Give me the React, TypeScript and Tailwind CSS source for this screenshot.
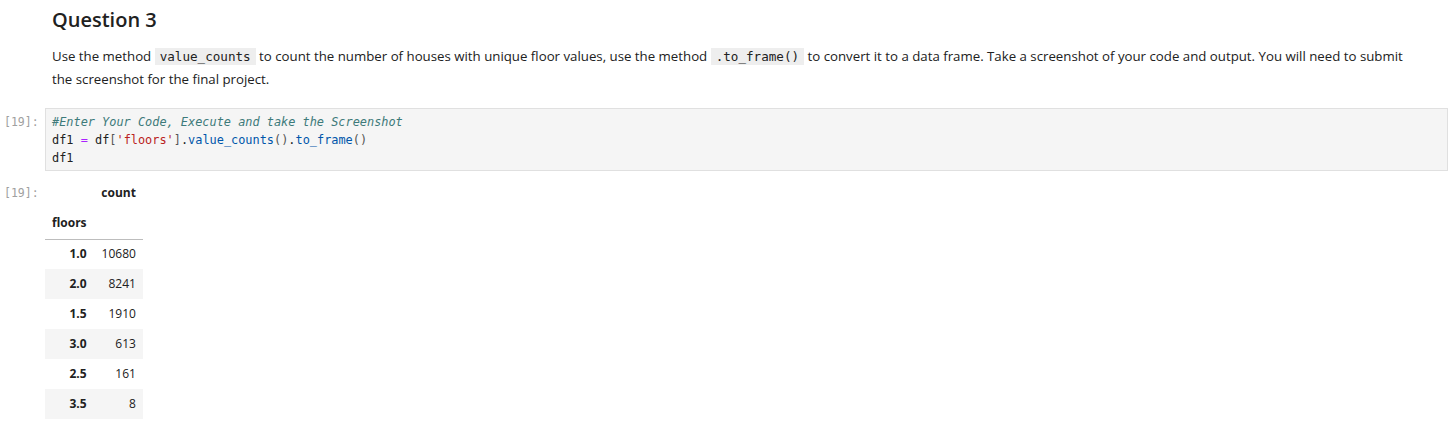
const rows = [
  { floors: "1.0", count: 10680 },
  { floors: "2.0", count: 8241 },
  { floors: "1.5", count: 1910 },
  { floors: "3.0", count: 613 },
  { floors: "2.5", count: 161 },
  { floors: "3.5", count: 8 },
];

const sans = "font-['Open_Sans',sans-serif]";
const mono = "font-['DejaVu_Sans_Mono',monospace]";

function Prompt({ children }: { children: React.ReactNode }) {
  return (
    <div className={`w-[45px] shrink-0 pl-[4px] text-[11.5px] text-[#a0a0a0] ${mono}`}>
      {children}
    </div>
  );
}

function InlineCode({ children }: { children: React.ReactNode }) {
  return (
    <code className={`bg-[#eeeeee] px-[5px] py-[1px] text-[12.6px] text-[#212121] ${mono}`}>
      {children}
    </code>
  );
}

export default function App() {
  return (
    <div className={`min-h-[427px] bg-white pr-[4px] text-[#212121] ${sans}`}>
      {/* markdown cell */}
      <div className="flex">
        <div className="w-[45px] shrink-0" />
        <div className="flex-1 pl-[7px] pr-[30px]">
          <h3 className="pt-[7px] text-[20px] font-semibold leading-[26px]">Question 3</h3>
          <p className="mt-[12px] text-[13.25px] leading-[22px]">
            Use the method <InlineCode>value_counts</InlineCode> to count the number of houses with unique floor
            values, use the method <InlineCode>.to_frame()</InlineCode> to convert it to a data frame. Take a
            screenshot of your code and output. You will need to submit the screenshot for the final project.
          </p>
        </div>
      </div>

      {/* code cell */}
      <div className="mt-[18px] flex">
        <Prompt>
          <div className="pt-[5px] leading-[18px]">[19]:</div>
        </Prompt>
        <div
          className={`flex-1 border border-[#e0e0e0] bg-[#f5f5f5] px-[6px] pt-[4px] pb-[3px] text-[11.9px] leading-[18px] ${mono}`}
        >
          <div className="italic text-[#3d7a7a]">#Enter Your Code, Execute and take the Screenshot</div>
          <div>
            <span>df1 </span>
            <span className="text-[#aa22ff]">=</span>
            <span> df</span>
            <span className="text-[#555555]">[</span>
            <span className="text-[#ba2121]">'floors'</span>
            <span className="text-[#555555]">]</span>
            <span>.</span>
            <span className="text-[#0055aa]">value_counts</span>
            <span className="text-[#555555]">()</span>
            <span>.</span>
            <span className="text-[#0055aa]">to_frame</span>
            <span className="text-[#555555]">()</span>
          </div>
          <div>df1</div>
        </div>
      </div>

      {/* output */}
      <div className="mt-[7px] flex">
        <Prompt>
          <div className="leading-[30px]">[19]:</div>
        </Prompt>
        <table className="border-collapse text-[12px]">
          <thead>
            <tr className="h-[30px]">
              <th className="px-[7px]" />
              <th className="px-[7px] text-right font-bold">count</th>
            </tr>
            <tr className="h-[31px] border-b border-[#bdbdbd]">
              <th className="px-[7px] text-left font-bold">floors</th>
              <th className="px-[7px]" />
            </tr>
          </thead>
          <tbody>
            {rows.map((r, i) => (
              <tr key={r.floors} className={`h-[30px] ${i % 2 === 1 ? "bg-[#f5f5f5]" : ""}`}>
                <th className="pl-[7px] pr-[7px] text-right font-bold">{r.floors}</th>
                <td className="pl-[8px] pr-[7px] text-right">{r.count}</td>
              </tr>
            ))}
          </tbody>
        </table>
      </div>
    </div>
  );
}
